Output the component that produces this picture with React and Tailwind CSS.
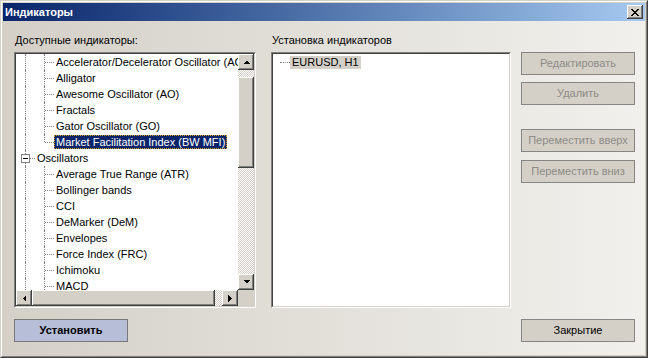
import React from 'react';

const raised = 'shadow-[inset_-1px_-1px_#404040,inset_1px_1px_#ffffff,inset_-2px_-2px_#808080,inset_2px_2px_#d4d0c8]';
const dither = 'bg-[repeating-conic-gradient(#d4d0c8_0_25%,#ffffff_0_50%)] bg-[length:2px_2px]';

const Arrow = ({ dir }) => {
    const pts = {
        up: '0,4 7,4 3.5,0.5',
        down: '0,0 7,0 3.5,3.5',
        left: '4,0 4,7 0.5,3.5',
        right: '0,0 0,7 3.5,3.5',
    }[dir];
    const vertical = dir === 'up' || dir === 'down';
    return (
        <svg width={vertical ? 7 : 4} height={vertical ? 4 : 7} viewBox={vertical ? '0 0 7 4' : '0 0 4 7'}>
            <polygon points={pts} fill="#000" shapeRendering="crispEdges" />
        </svg>
    );
};

const ScrollBtn = ({ dir }) => (
    <div className={`w-[16px] h-[16px] shrink-0 bg-[#d4d0c8] flex items-center justify-center ${raised}`}>
        <Arrow dir={dir} />
    </div>
);

const VLine = ({ half }) => (
    <span className={`absolute left-[9px] top-0 border-l border-dotted border-[#808080] ${half ? 'h-[8px]' : 'h-full'}`} />
);

const ChildRow = ({ label, last, selected }) => (
    <div className="flex h-[16px] items-center whitespace-nowrap">
        <div className="relative w-[19px] h-full shrink-0">
            <VLine />
        </div>
        <div className="relative w-[19px] h-full shrink-0">
            <VLine half={last} />
            <span className="absolute left-[10px] top-[8px] w-[9px] border-t border-dotted border-[#808080]" />
        </div>
        <span
            className={`px-[2px] leading-[14px] ${
                selected ? 'bg-[#0a246a] text-white outline outline-1 outline-dotted outline-[#d4a017] -outline-offset-1' : 'text-black'
            }`}
        >
            {label}
        </span>
    </div>
);

const GroupRow = ({ label }) => (
    <div className="flex h-[16px] items-center whitespace-nowrap">
        <div className="relative w-[19px] h-full shrink-0">
            <VLine />
            <span className="absolute left-[5px] top-[4px] w-[9px] h-[9px] border border-[#808080] bg-white flex items-center justify-center">
                <span className="w-[5px] border-t border-black" />
            </span>
            <span className="absolute left-[14px] top-[8px] w-[5px] border-t border-dotted border-[#808080]" />
        </div>
        <span className="px-[2px] leading-[14px] text-black">{label}</span>
    </div>
);

const Sunken = ({ className, children }) => (
    <div className={`border border-t-[#808080] border-l-[#808080] border-b-white border-r-white ${className}`}>
        <div className="h-full border border-t-[#404040] border-l-[#404040] border-b-[#d4d0c8] border-r-[#d4d0c8] bg-white">
            {children}
        </div>
    </div>
);

const Btn = ({ children, disabled, primary, className = '' }) => (
    <div
        className={`h-[23px] w-[114px] flex items-center justify-center border ${
            primary ? 'bg-[#b6bed8] border-[#787878] font-bold text-black' : 'bg-[#d4d0c8] border-[#858585]'
        } ${disabled ? 'text-[#8d8b86]' : 'text-black'} ${className}`}
    >
        {children}
    </div>
);

export default function App() {
    const firstGroup = [
        'Accelerator/Decelerator Oscillator (AC)',
        'Alligator',
        'Awesome Oscillator (AO)',
        'Fractals',
        'Gator Oscillator (GO)',
    ];
    const oscillators = [
        'Average True Range (ATR)',
        'Bollinger bands',
        'CCI',
        'DeMarker (DeM)',
        'Envelopes',
        'Force Index (FRC)',
        'Ichimoku',
        'MACD',
    ];

    return (
        <div className="w-[648px] h-[358px] text-[11px] font-['Liberation_Sans',Arial,sans-serif] border border-t-[#d4d0c8] border-l-[#d4d0c8] border-r-[#404040] border-b-[#404040]">
            <div className="h-full flex flex-col border border-t-white border-l-white border-r-[#808080] border-b-[#808080] p-[1px] bg-[#d4d0c8]">
                <div className="h-[18px] shrink-0 flex items-center justify-between pl-[2px] pr-[2px] bg-gradient-to-r from-[#0a246a] to-[#a6caf0]">
                    <span className="text-white font-bold text-[11px] leading-none">Индикаторы</span>
                    <div className={`w-[16px] h-[14px] bg-[#d4d0c8] flex items-center justify-center ${raised}`}>
                        <svg width="8" height="7" viewBox="0 0 8 7" shapeRendering="crispEdges">
                            <path d="M0 0h2v1h-2zM6 0h2v1h-2zM1 1h2v1h-2zM5 1h2v1h-2zM2 2h4v1h-4zM3 3h2v1h-2zM2 4h4v1h-4zM1 5h2v1h-2zM5 5h2v1h-2zM0 6h2v1h-2zM6 6h2v1h-2z" fill="#000" />
                        </svg>
                    </div>
                </div>

                <div className="flex-1 flex flex-col pl-[11px] pr-[10px] pt-[13px] bg-gradient-to-r from-[#d4d0c8] to-[#f1f0ec]">
                    <div className="flex">
                        <div className="w-[242px] shrink-0">
                            <div className="h-[13px] leading-[13px] pl-[1px] text-black mb-[5px]">Доступные индикаторы:</div>
                            <Sunken className="h-[256px]">
                                <div className="flex flex-col h-full">
                                    <div className="flex flex-1 min-h-0">
                                        <div className="flex-1 overflow-hidden">
                                            {firstGroup.map((t) => (
                                                <ChildRow key={t} label={t} />
                                            ))}
                                            <ChildRow label="Market Facilitation Index (BW MFI)" last selected />
                                            <GroupRow label="Oscillators" />
                                            {oscillators.map((t) => (
                                                <ChildRow key={t} label={t} />
                                            ))}
                                        </div>
                                        <div className="w-[16px] flex flex-col shrink-0">
                                            <ScrollBtn dir="up" />
                                            <div className={`h-[7px] ${dither}`} />
                                            <div className={`h-[91px] bg-[#d4d0c8] ${raised}`} />
                                            <div className={`flex-1 ${dither}`} />
                                            <ScrollBtn dir="down" />
                                        </div>
                                    </div>
                                    <div className="flex h-[16px] shrink-0">
                                        <ScrollBtn dir="left" />
                                        <div className={`w-[183px] bg-[#d4d0c8] ${raised}`} />
                                        <div className={`flex-1 ${dither}`} />
                                        <ScrollBtn dir="right" />
                                        <div className="w-[16px] bg-[#d4d0c8]" />
                                    </div>
                                </div>
                            </Sunken>
                        </div>

                        <div className="w-[240px] shrink-0 ml-[15px]">
                            <div className="h-[13px] leading-[13px] pl-[1px] text-black mb-[5px]">Установка индикаторов</div>
                            <Sunken className="h-[256px]">
                                <div className="flex h-[16px] items-center pl-[7px] whitespace-nowrap">
                                    <span className="w-[10px] border-t border-dotted border-[#808080]" />
                                    <span className="px-[2px] leading-[13px] bg-[#d4d0c8] text-black">EURUSD, H1</span>
                                </div>
                            </Sunken>
                        </div>

                        <div className="ml-[10px] pt-[18px] flex flex-col">
                            <Btn disabled>Редактировать</Btn>
                            <Btn disabled className="mt-[7px]">Удалить</Btn>
                            <Btn disabled className="mt-[24px]">Переместить вверх</Btn>
                            <Btn disabled className="mt-[8px]">Переместить вниз</Btn>
                        </div>
                    </div>

                    <div className="flex justify-between mt-[11px]">
                        <Btn primary>Установить</Btn>
                        <Btn>Закрытие</Btn>
                    </div>
                </div>
            </div>
        </div>
    );
}
